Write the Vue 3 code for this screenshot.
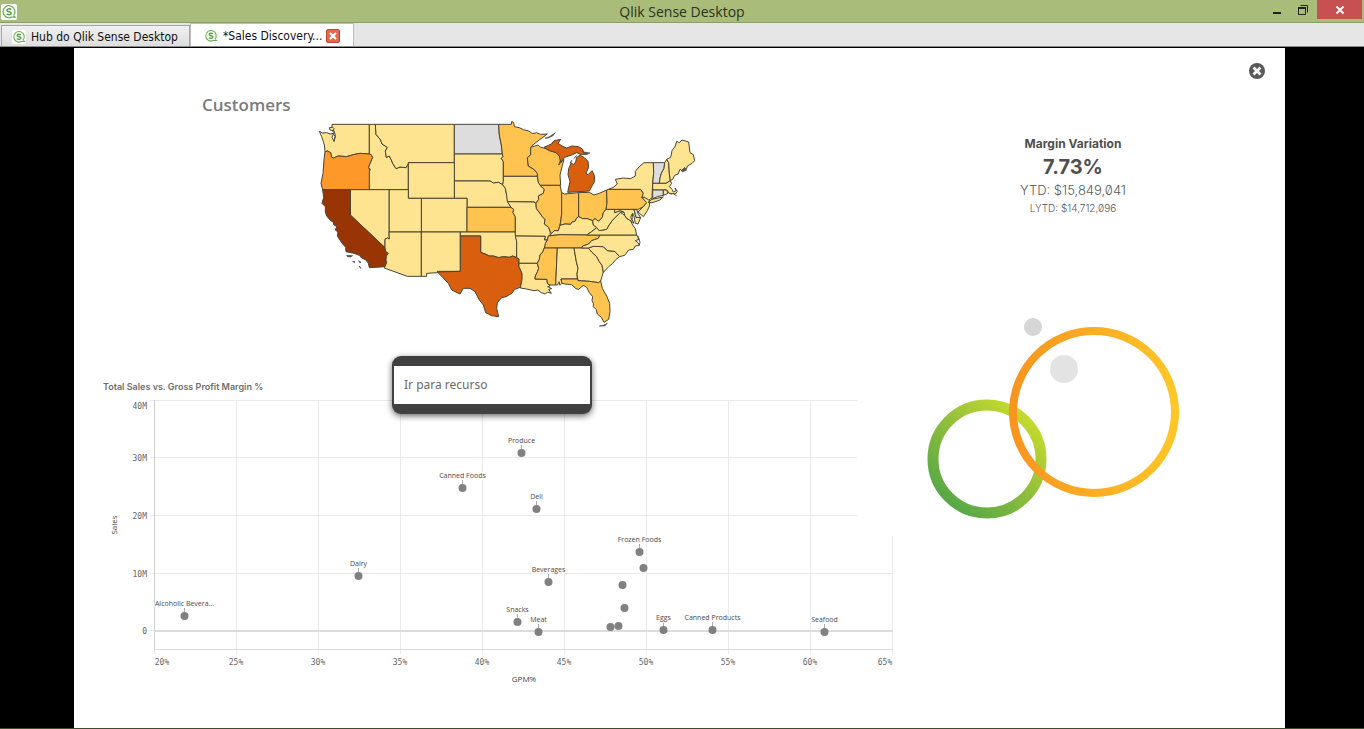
<script setup>
import { ref } from 'vue'

const tone = {
  low: '#fee391',
  mid: '#fec44f',
  high: '#fe9929',
  top: '#d95f0e',
  max: '#993404',
  none: '#dddddd'
}

const states = [
  ['WA', 'low', '28,64 38,69 50,68 60,72 71,70 66,82 72,94 76,76 72,62 60,60 58,53 66,52 66,43 178,43 178,132 150,130 130,134 110,140 85,138 70,144 65,142 62,128 52,123 45,125 43,105 40,95 35,80'],
  ['OR', 'high', '45,125 52,123 62,128 65,142 70,144 85,138 110,140 130,134 150,130 178,132 184,134 188,142 176,172 180,185 178,239 38,239 33,220 39,190 42,150'],
  ['ID', 'low', '178,43 196,43 198,73 212,90 216,102 232,112 226,124 229,142 238,138 244,150 248,160 258,176 270,171 288,173 295,161 295,239 178,239 178,185 181,178 176,172 188,142 184,134 178,132'],
  ['MT', 'low', '196,43 433,43 433,158 295,158 295,161 288,173 270,171 258,176 248,160 244,150 238,138 229,142 226,124 232,112 216,102 212,90 198,73'],
  ['ND', 'none', '433,43 566,43 568,75 574,105 577,132 433,132'],
  ['SD', 'low', '433,132 577,132 579,140 574,145 580,155 580,214 578,224 565,217 550,219 540,213 433,213'],
  ['NE', 'low', '433,213 540,213 550,219 565,217 578,224 586,235 590,256 594,275 603,292 471,292 471,265 433,265'],
  ['WY', 'low', '295,158 433,158 433,265 295,265'],
  ['CO', 'low', '334,265 471,265 471,366 334,366'],
  ['UT', 'low', '237,239 295,239 295,265 334,265 334,366 237,366'],
  ['NV', 'low', '121,239 237,239 237,366 238,387 232,384 225,388 225,413 121,315'],
  ['CA', 'max', '38,239 121,239 121,315 225,413 227,424 235,430 229,438 228,450 230,458 227,470 178,473 175,460 168,450 155,444 148,436 132,430 108,425 107,412 98,402 90,390 82,378 84,366 76,360 80,350 70,343 72,338 62,332 50,318 46,306 46,290 36,280 41,262'],
  ['AZ', 'low', '237,366 334,366 334,499 292,499 223,474 230,458 228,450 229,438 235,430 227,424 225,413 225,388 232,384 238,387'],
  ['NM', 'low', '334,366 451,366 451,484 382,484 384,488 350,490 350,499 334,499'],
  ['KS', 'mid', '471,292 603,292 611,298 609,308 616,320 616,366 471,366'],
  ['OK', 'low', '451,366 616,366 620,395 620,442 608,438 598,442 580,440 566,443 550,438 538,438 525,432 512,427 512,378 451,378'],
  ['TX', 'top', '451,378 512,378 512,427 525,432 538,438 550,438 566,443 580,440 598,442 608,438 627,447 627,470 636,490 636,508 631,532 614,538 606,550 588,560 575,563 562,578 560,595 566,620 545,617 527,608 520,585 508,570 495,545 480,535 460,535 450,552 425,540 415,520 398,502 382,486 451,484'],
  ['MN', 'mid', '566,43 604,43 605,35 611,37 613,50 628,53 640,59 656,63 668,71 680,68 692,73 712,72 690,88 665,108 662,122 662,135 652,143 655,168 672,178 682,190 682,199 580,199 580,155 574,145 579,140 577,132 574,105 568,75'],
  ['WI', 'mid', '662,112 674,108 684,105 692,112 705,115 722,122 742,128 750,140 752,150 746,165 752,158 762,148 756,170 750,195 752,226 690,226 684,218 682,190 672,178 655,168 652,143 662,135'],
  ['IA', 'low', '580,199 682,199 684,215 690,226 703,238 700,250 685,258 686,268 678,280 672,276 592,275 590,256 586,235 578,224 580,214'],
  ['MO', 'low', '592,275 672,276 678,280 679,295 690,310 697,320 705,328 703,342 716,352 721,366 720,376 715,378 712,390 703,390 706,379 616,378 616,320 609,308 611,298 603,292'],
  ['IL', 'mid', '690,226 750,226 755,248 755,312 753,328 750,345 745,362 733,362 725,370 721,366 716,352 703,342 705,328 697,320 690,310 679,295 678,280 686,268 685,258 700,250 703,238'],
  ['IN', 'mid', '755,248 763,252 806,248 806,320 800,324 795,334 786,336 782,343 765,342 750,346 753,328 755,312'],
  ['OH', 'mid', '806,248 838,247 852,255 868,250 890,240 891,280 888,298 880,308 877,322 866,334 855,326 848,332 832,326 818,326 806,320'],
  ['KY', 'low', '725,370 733,362 745,362 750,346 765,342 782,343 786,336 795,334 800,324 806,320 818,326 832,326 848,332 850,345 860,353 845,365 830,375 750,374 720,377'],
  ['TN', 'mid', '715,378 750,374 830,375 870,375 865,385 845,392 836,402 818,408 815,414 703,414 706,400 712,390'],
  ['AR', 'low', '616,378 706,379 703,390 712,390 706,400 703,414 698,426 690,435 688,448 682,460 627,460 627,447 620,442 620,395'],
  ['LA', 'low', '627,460 682,460 686,475 682,486 676,498 675,507 711,508 712,520 720,528 713,530 725,536 716,538 724,550 712,546 706,552 694,548 684,540 672,542 650,537 631,534 636,508 636,490 627,470'],
  ['MS', 'mid', '703,414 742,414 737,525 720,525 712,520 711,508 675,507 676,498 682,486 686,475 682,460 688,448 690,435 698,426'],
  ['AL', 'low', '742,414 792,414 799,455 804,475 801,492 802,507 753,507 756,520 750,526 747,515 743,525 737,525'],
  ['GA', 'low', '792,414 835,414 845,426 860,440 868,455 876,466 880,486 876,500 872,513 866,518 838,514 804,512 801,492 804,475 799,455'],
  ['FL', 'mid', '753,507 802,507 804,512 838,514 866,518 872,513 877,535 890,558 899,580 900,605 896,628 882,637 874,622 862,612 858,598 850,590 850,580 846,572 848,560 838,548 830,532 820,526 806,538 798,536 785,524 765,522 756,520'],
  ['SC', 'low', '835,414 850,409 880,410 892,422 914,424 929,440 918,448 908,460 896,470 880,487 876,466 868,455 860,440 845,426'],
  ['NC', 'low', '870,375 980,375 987,388 976,392 984,398 988,406 976,408 970,418 956,420 944,436 929,440 914,424 892,422 880,410 850,409 835,414 815,414 818,408 836,402 845,392 865,385'],
  ['VA', 'low', '830,375 845,365 860,353 868,362 890,358 897,345 908,330 920,318 931,307 944,316 950,325 962,332 968,345 976,356 980,375'],
  ['WV', 'low', '848,332 855,326 866,334 877,322 880,308 888,298 914,298 914,308 930,302 942,306 931,307 920,318 908,330 897,345 890,358 868,362 860,353 850,345'],
  ['MD', 'low', '914,298 972,298 978,322 992,323 984,342 976,340 972,318 968,310 966,328 972,340 962,332 950,325 944,316 942,306 930,302 914,308'],
  ['DE', 'none', '972,298 980,298 984,310 992,323 978,322'],
  ['PA', 'mid', '890,240 896,238 992,238 1000,250 996,262 1010,278 1000,290 985,298 888,298 891,280'],
  ['NJ', 'low', '996,262 1004,262 1020,270 1018,288 1012,302 1000,320 984,306 1000,290 1010,278'],
  ['NY', 'low', '896,238 910,232 922,222 916,208 940,204 962,206 976,198 976,184 988,170 1002,158 1030,158 1031,190 1028,220 1027,240 1026,264 1016,270 1004,262 996,262 1000,250 992,238'],
  ['Long Island', 'low', '1014,277 1026,268 1060,261 1048,271 1026,278'],
  ['VT', 'none', '1030,158 1064,158 1062,175 1054,190 1050,205 1048,220 1028,220 1031,190'],
  ['NH', 'low', '1064,158 1070,148 1076,158 1078,190 1081,212 1068,220 1048,220 1050,205 1054,190 1062,175'],
  ['MA', 'low', '1028,220 1068,220 1081,212 1085,220 1078,230 1086,238 1090,246 1098,242 1095,234 1102,244 1096,252 1078,250 1070,240 1028,240'],
  ['CT', 'none', '1028,240 1060,240 1060,256 1042,260 1028,266'],
  ['RI', 'low', '1060,240 1070,240 1074,250 1060,256'],
  ['ME', 'low', '1070,148 1082,142 1086,122 1096,108 1100,94 1108,98 1116,90 1136,96 1140,128 1150,134 1154,152 1146,160 1132,168 1130,176 1116,182 1110,178 1104,192 1094,196 1088,208 1081,212 1078,190 1076,158'],
  ['MI lower', 'top', '773,247 838,243 846,228 854,214 853,196 846,182 834,194 828,190 836,172 834,154 822,142 810,136 800,142 797,156 790,164 784,158 776,176 774,194 780,214'],
  ['MI upper', 'top', '702,112 724,102 732,92 752,88 744,100 756,108 770,114 786,108 806,110 818,118 820,126 832,132 814,134 800,128 788,134 776,138 764,142 752,158 748,138 738,128 718,122']
]

const islands = [
  '705,85 718,80 736,68 728,78 714,84',
  '817,125 840,129 830,133',
  '110,436 128,437 122,441 112,440',
  '128,453 135,456 132,458',
  '146,452 153,457 150,459',
  '148,468 153,475 150,473',
  '1114,182 1124,172 1130,180 1118,186',
  '868,648 880,646 892,640 884,648'
]

const chartRows = [
  { label: '40M', y: 400, textY: 409, end: 857 },
  { label: '30M', y: 457, textY: 461, end: 857 },
  { label: '20M', y: 515, textY: 519, end: 857 },
  { label: '10M', y: 573, textY: 577, end: 892 },
  { label: '0', y: 630, textY: 634, end: 892 }
]

const chartCols = [
  { label: '20%', x: 154, textX: 162, top: 400 },
  { label: '25%', x: 236, textX: 236, top: 400 },
  { label: '30%', x: 318, textX: 318, top: 400 },
  { label: '35%', x: 400, textX: 400, top: 400 },
  { label: '40%', x: 482, textX: 482, top: 400 },
  { label: '45%', x: 564, textX: 564, top: 400 },
  { label: '50%', x: 646, textX: 646, top: 400 },
  { label: '55%', x: 728, textX: 728, top: 400 },
  { label: '60%', x: 810, textX: 810, top: 400 },
  { label: '65%', x: 892, textX: 885, top: 536 }
]

const points = [
  { name: 'Alcoholic Bevera...', x: 184, y: 616 },
  { name: 'Dairy', x: 358, y: 576 },
  { name: 'Canned Foods', x: 462, y: 488 },
  { name: 'Produce', x: 521, y: 453 },
  { name: 'Deli', x: 536, y: 509 },
  { name: 'Beverages', x: 548, y: 582 },
  { name: 'Snacks', x: 517, y: 622 },
  { name: 'Meat', x: 538, y: 632 },
  { name: 'Frozen Foods', x: 639, y: 552 },
  { x: 643, y: 568 },
  { x: 622, y: 585 },
  { x: 624, y: 608 },
  { x: 610, y: 627 },
  { x: 618, y: 626 },
  { name: 'Eggs', x: 663, y: 630 },
  { name: 'Canned Products', x: 712, y: 630 },
  { name: 'Seafood', x: 824, y: 632 }
]

const activeTab = ref(1)
</script>

<template>
  <div class="window">
    <header class="titlebar">
      <svg class="logo" viewBox="0 0 16 16" aria-hidden="true">
        <rect width="16" height="16" rx="2" fill="#fff" />
        <path d="M12.6 11.6A6 6 0 1 0 10.5 13.2H14.2L12.6 11.6" fill="none" stroke="#6cb350" stroke-width="1.3" />
        <path d="M10.2 5.6C9 4.4 5.8 4.6 5.9 6.4C6 8.2 10.2 7.2 10.2 9.2C10.2 11 6.8 11 5.6 9.8" fill="none" stroke="#4f9e3c" stroke-width="1.5" />
      </svg>
      <div class="app-name">Qlik Sense Desktop</div>
      <div class="window-buttons">
        <button type="button" aria-label="Minimize">
          <svg width="12" height="12" viewBox="0 0 12 12"><path d="M2 9H10" stroke="#222" stroke-width="2" /></svg>
        </button>
        <button type="button" aria-label="Restore">
          <svg width="12" height="12" viewBox="0 0 12 12" fill="none" stroke="#222"><path d="M1.5 4H8.5V10.5H1.5Z" /><path d="M1 4H9" stroke-width="2" /><path d="M3.5 1.5H10.5V8.5" /></svg>
        </button>
        <button type="button" class="quit" aria-label="Close">
          <svg width="12" height="12" viewBox="0 0 12 12"><path d="M2.5 2.5L9.5 9.5M9.5 2.5L2.5 9.5" stroke="#fff" stroke-width="1.8" /></svg>
        </button>
      </div>
    </header>

    <nav class="tabs">
      <div class="tab" :class="{ active: activeTab === 0 }">
        <button type="button" class="tab-name" @click="activeTab = 0">
          <svg class="tab-logo" viewBox="0 0 16 16" aria-hidden="true">
            <rect width="16" height="16" rx="2" fill="#fff" />
            <path d="M12.6 11.6A6 6 0 1 0 10.5 13.2H14.2L12.6 11.6" fill="none" stroke="#6cb350" stroke-width="1.3" />
            <path d="M10.2 5.6C9 4.4 5.8 4.6 5.9 6.4C6 8.2 10.2 7.2 10.2 9.2C10.2 11 6.8 11 5.6 9.8" fill="none" stroke="#4f9e3c" stroke-width="1.5" />
          </svg>
          Hub do Qlik Sense Desktop
        </button>
      </div>
      <div class="tab" :class="{ active: activeTab === 1 }">
        <button type="button" class="tab-name" @click="activeTab = 1">
          <svg class="tab-logo" viewBox="0 0 16 16" aria-hidden="true">
            <path d="M12.6 11.6A6 6 0 1 0 10.5 13.2H14.2L12.6 11.6" fill="none" stroke="#6cb350" stroke-width="1.3" />
            <path d="M10.2 5.6C9 4.4 5.8 4.6 5.9 6.4C6 8.2 10.2 7.2 10.2 9.2C10.2 11 6.8 11 5.6 9.8" fill="none" stroke="#4f9e3c" stroke-width="1.5" />
          </svg>
          *Sales Discovery...
        </button>
        <button type="button" class="tab-close" aria-label="Close tab">
          <svg width="14" height="14" viewBox="0 0 14 14"><rect x=".5" y=".5" width="13" height="13" rx="1.5" fill="#e4694a" stroke="#b8482f" /><path d="M4 4L10 10M10 4L4 10" stroke="#fff" stroke-width="2.2" /></svg>
        </button>
      </div>
    </nav>

    <main class="stage">
      <div class="sheet">
        <button type="button" class="sheet-close" aria-label="Close sheet">
          <svg width="16" height="16" viewBox="0 0 16 16"><circle cx="8" cy="8" r="8" fill="#595959" /><path d="M4.5 4.5L11.5 11.5M11.5 4.5L4.5 11.5" stroke="#fff" stroke-width="2.8" /></svg>
        </button>

        <section class="charts">
          <h1>Customers</h1>
          <svg class="map" viewBox="0 12 1200 648" role="img" aria-label="Customers by state">
            <g stroke="#4a4433" stroke-width="3" stroke-linejoin="round">
              <polygon v-for="s in states" :key="s[0]" :points="s[2]" :fill="tone[s[1]]" />
            </g>
            <g fill="#555" stroke="#4a4a4a" stroke-width="2">
              <polygon v-for="i in islands" :key="i" :points="i" />
            </g>
            <g fill="none" stroke="#4a4a4a" stroke-width="3">
              <path d="M66 50L72 56L68 64L75 70M70 72L76 80L72 94M1090 250L1100 258M966 312L962 322L968 334M984 378L990 396L988 406" />
              <path d="M1078 250L1086 252M786 150L780 160M800 136L792 146" />
            </g>
          </svg>

          <h2>Total Sales vs. Gross Profit Margin %</h2>
          <svg class="scatter" viewBox="90 393 814 300" role="img" aria-label="Sales against GPM%">
            <g fill="#ebebeb">
              <rect v-for="c in chartCols" :key="c.label" :x="c.x" :y="c.top" width="1" :height="654 - c.top" />
              <rect v-for="r in chartRows" :key="r.label" x="150" :y="r.y" :width="r.end - 150" height="1" />
            </g>
            <rect x="154" y="400" width="1" height="250" fill="#cfcfcf" />
            <rect x="154" y="649" width="739" height="1" fill="#dadada" />
            <rect x="154" y="630" width="739" height="2" fill="#dcdcdc" />
            <g class="tick">
              <text v-for="r in chartRows" :key="r.label" x="147" :y="r.textY" text-anchor="end">{{ r.label }}</text>
              <text v-for="c in chartCols" :key="c.label" :x="c.textX" y="665" text-anchor="middle">{{ c.label }}</text>
            </g>
            <text class="axis" x="524" y="682" text-anchor="middle">GPM%</text>
            <text class="axis" transform="translate(117 525) rotate(-90)" text-anchor="middle">Sales</text>
            <g v-for="p in points" :key="p.x">
              <template v-if="p.name">
                <rect :x="p.x" :y="p.y - 8" width="1" height="4" fill="#aaa" />
                <text class="label" :x="p.x + 0.5" :y="p.y - 10" text-anchor="middle">{{ p.name }}</text>
              </template>
              <circle :cx="p.x + 0.5" :cy="p.y" r="4" fill="#808080" />
            </g>
          </svg>

          <div class="menu" role="menu">
            <button type="button" role="menuitem">Ir para recurso</button>
          </div>
        </section>

        <section class="side">
          <div class="kpi">
            <div class="kpi-title">Margin Variation</div>
            <div class="kpi-value">7.73%</div>
            <div class="kpi-ytd">YTD: $15,849,041</div>
            <div class="kpi-lytd">LYTD: $14,712,096</div>
          </div>
          <svg class="rings" viewBox="920 310 270 220" aria-hidden="true">
            <defs>
              <linearGradient id="green" x1="0.15" y1="0.9" x2="0.85" y2="0.1">
                <stop offset="0" stop-color="#58a846" />
                <stop offset="0.5" stop-color="#8fbe3d" />
                <stop offset="1" stop-color="#c4d92d" />
              </linearGradient>
              <linearGradient id="orange" x1="0" y1="0.5" x2="1" y2="0.5">
                <stop offset="0" stop-color="#f89420" />
                <stop offset="1" stop-color="#ffc628" />
              </linearGradient>
            </defs>
            <circle cx="1033" cy="327" r="9" fill="#d6d6d6" />
            <circle cx="1064" cy="369" r="14" fill="#e3e3e3" />
            <circle cx="987" cy="459" r="54" fill="none" stroke="url(#green)" stroke-width="11" />
            <circle cx="1094" cy="412" r="81" fill="none" stroke="url(#orange)" stroke-width="8" />
          </svg>
        </section>
      </div>
    </main>
  </div>
</template>

<style>
body {
  background: #000;
}
</style>

<style scoped>
.window {
  box-sizing: border-box;
  min-height: 100vh;
  display: flex;
  flex-direction: column;
  background: #000;
  border-bottom: 1px solid #3f4c2c;
  font-family: "Open Sans", "Noto Sans", sans-serif;
}

button {
  margin: 0;
  padding: 0;
  border: 0;
  background: none;
  font: inherit;
  color: inherit;
}

svg {
  display: block;
}

.titlebar {
  display: grid;
  grid-template-columns: 1fr auto 1fr;
  align-items: center;
  height: 22px;
  background: #a9bc7a;
  border-bottom: 1px solid #8d9d68;
}

.logo {
  width: 16px;
  height: 16px;
  margin-left: 1px;
}

.app-name {
  font-size: 14px;
  line-height: 24px;
  color: #2c3320;
}

.window-buttons {
  display: flex;
  justify-content: flex-end;
  align-self: start;
}

.window-buttons button {
  display: flex;
  align-items: center;
  justify-content: center;
  width: 26px;
  height: 19px;
}

.window-buttons .quit {
  width: 45px;
  background: #c75050;
  margin-left: 1px;
  margin-right: 2px;
}

.tabs {
  display: flex;
  align-items: flex-end;
  height: 23px;
  padding-left: 1px;
  background: #e6e6e6;
  border-bottom: 1px solid #8c8c8c;
  font-family: "DejaVu Sans Condensed", "DejaVu Sans", sans-serif;
  font-size: 12px;
  color: #111;
}

.tab {
  display: flex;
  align-items: center;
  gap: 4px;
  box-sizing: border-box;
  height: 21px;
  padding: 1px 11px 0 10px;
  background: linear-gradient(#f1f1f1, #dedede);
  border: 1px solid #a5a5a5;
  border-bottom: 0;
}

.tab.active {
  height: 23px;
  padding: 1px 13px 0;
  background: #fff;
  border-color: #bbb;
}

.tab-name {
  display: flex;
  align-items: center;
  gap: 5px;
}

.tab-logo {
  width: 14px;
  height: 14px;
}

.stage {
  flex: 1;
  display: flex;
  padding: 1px 79px 0 74px;
}

.sheet {
  position: relative;
  flex: 1;
  display: grid;
  grid-template-columns: 830fr 381fr;
  background: #fff;
}

.sheet-close {
  position: absolute;
  top: 15px;
  right: 20px;
}

.charts {
  position: relative;
  padding: 48px 0 0 16px;
}

h1 {
  margin: 0 0 0 112px;
  font-size: 17px;
  font-weight: 600;
  line-height: 18px;
  color: #7b7b7b;
}

.map {
  width: 400px;
  margin-left: 220px;
}

h2 {
  margin: 51px 0 0 13px;
  font-family: Inter, sans-serif;
  font-size: 9px;
  font-weight: 600;
  line-height: 12px;
  color: #6e6e6e;
}

.scatter {
  width: 100%;
}

.tick {
  font-family: "DejaVu Sans Mono", monospace;
  font-size: 8px;
  fill: #666;
}

.axis {
  font-family: "Open Sans", sans-serif;
  font-size: 8px;
  fill: #444;
}

.label {
  font-family: "Open Sans", sans-serif;
  font-size: 7px;
  fill: #4a4a4a;
  stroke: #fff;
  stroke-width: 2px;
  paint-order: stroke;
}

.menu {
  position: absolute;
  top: 308px;
  left: 318px;
  box-sizing: border-box;
  width: 200px;
  padding: 10px 2px;
  background: #404040;
  border-radius: 9px;
  box-shadow: 0 2px 6px rgba(0, 0, 0, 0.6);
}

.menu button {
  display: block;
  width: 100%;
  padding: 0 10px;
  background: #fff;
  text-align: left;
  font-family: "Noto Sans", sans-serif;
  font-size: 12px;
  line-height: 38px;
  color: #6a6a6a;
}

.kpi {
  padding: 87px 43px 0 0;
  text-align: center;
  font-family: Inter, sans-serif;
  font-feature-settings: "zero";
  color: #4f4f4f;
}

.kpi-title {
  font-size: 12px;
  font-weight: 700;
  line-height: 18px;
}

.kpi-value {
  font-size: 20px;
  font-weight: 700;
  line-height: 28px;
}

.kpi-ytd {
  font-size: 13px;
  font-weight: 300;
  line-height: 18px;
  color: #5a5a5a;
}

.kpi-lytd {
  font-size: 10px;
  font-weight: 300;
  line-height: 18px;
  color: #5a5a5a;
}

.rings {
  width: 270px;
  margin: 93px 0 0 16px;
}
</style>
